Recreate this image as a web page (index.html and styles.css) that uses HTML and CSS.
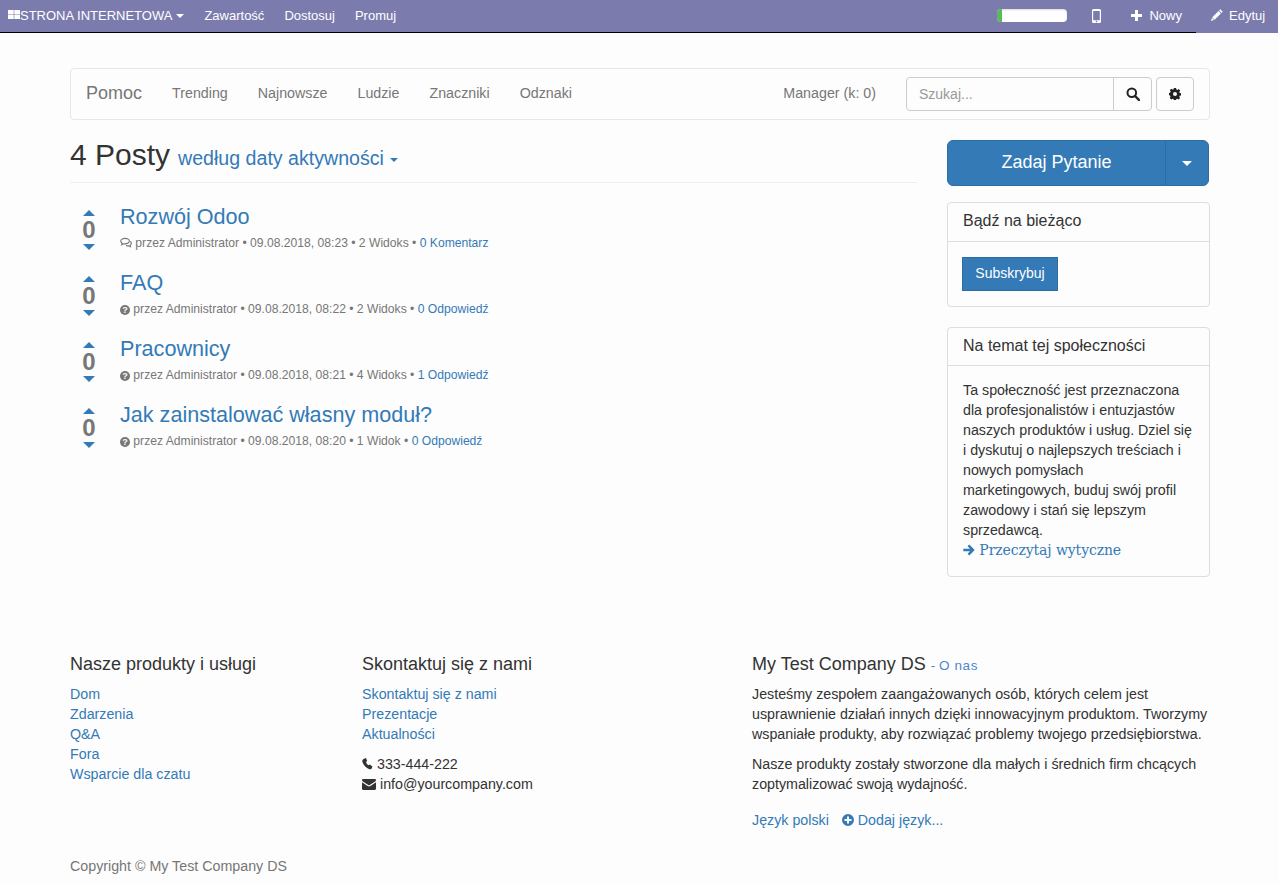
FILE: index.html
```html
<!DOCTYPE html>
<html lang="pl">
<head>
    <meta charset="utf-8">
    <title>Pomoc</title>
    <link rel="stylesheet" href="styles.css">
</head>
<body>
    <!-- admin bar -->
    <div class="topbar">
        <div class="topleft">
            <a class="toplink sitemenu" href="#">
                <svg class="apps" width="12" height="9" viewBox="0 0 12 9"><path fill="#fff" d="M0 0h5.700v4.300H0zM6.300 0H12v4.300H6.300zM0 4.800h5.700V9H0zM6.300 4.800H12V9H6.300z"/></svg>STRONA INTERNETOWA<span class="caret"></span>
            </a>
            <a class="toplink" href="#">Zawartość</a>
            <a class="toplink" href="#">Dostosuj</a>
            <a class="toplink" href="#">Promuj</a>
        </div>
        <div class="topright">
            <div class="progress"><div class="progressfill"></div></div>
            <a class="toplink mobile" href="#">
                <svg width="9" height="14" viewBox="0 0 9 14"><path fill="#fff" fill-rule="evenodd" d="M1.500 0h6A1.500 1.500 0 0 1 9 1.500v11A1.500 1.500 0 0 1 7.500 14h-6A1.500 1.500 0 0 1 0 12.500v-11A1.500 1.500 0 0 1 1.500 0zM1.200 2v9.300h6.600V2zM4.500 11.800a.8.8 0 1 0 0 1.600.8.8 0 0 0 0-1.600z"/></svg>
            </a>
            <a class="toplink newlink" href="#">
                <svg width="11" height="11" viewBox="0 0 11 11"><path fill="#fff" d="M4 0h3v4h4v3H7v4H4V7H0V4h4z"/></svg>Nowy
            </a>
            <a class="toplink editlink" href="#">
                <svg width="12" height="12" viewBox="0 0 12 12"><path fill="#fff" d="M9.300 .3l2.400 2.400-1.200 1.200-2.400-2.400zM7.500 2.100l2.400 2.400-6.300 6.300-2.400-2.400zM.9 9l2.100 2.100-3 .9z"/></svg>Edytuj
            </a>
        </div>
    </div>

    <div class="page">
        <!-- forum nav -->
        <nav class="forumnav">
            <a class="brand" href="#">Pomoc</a>
            <a class="navlink" href="#">Trending</a>
            <a class="navlink" href="#">Najnowsze</a>
            <a class="navlink" href="#">Ludzie</a>
            <a class="navlink" href="#">Znaczniki</a>
            <a class="navlink" href="#">Odznaki</a>
            <a class="navlink manager" href="#">Manager (k: 0)</a>
            <div class="searchgroup">
                <input class="searchinput" type="text" placeholder="Szukaj...">
                <button class="searchbtn" type="button">
                    <svg width="14" height="14" viewBox="0 0 14 14"><circle cx="5.800" cy="5.800" r="4.300" fill="none" stroke="#222" stroke-width="2"/><path d="M9 9l4 4" stroke="#222" stroke-width="2.400" stroke-linecap="round"/></svg>
                </button>
            </div>
            <button class="gearbtn" type="button">
                <svg width="12" height="12" viewBox="0 0 12 12"><path fill="#222" fill-rule="evenodd" d="M4.900 0h2.200l.3 1.600 1 .4 1.300-.9 1.500 1.500-.9 1.400.5 1 1.200.3v2.200l-1.300.3-.4 1 .8 1.300-1.500 1.500-1.400-.8-1 .4-.3 1.400H4.900l-.3-1.400-1-.4-1.400.8L.7 10l.8-1.300-.4-1L0 7.100V4.900l1.200-.3.5-1-.9-1.400L2.300 .7l1.300 .9 1-.4zM6 4a2 2 0 1 0 0 4 2 2 0 0 0 0-4z"/></svg>
            </button>
        </nav>

        <div class="content">
            <div class="maincol">
                <div class="posthead">
                    <h1>4 Posty</h1>
                    <a class="sortlink" href="#">według daty aktywności<span class="caret"></span></a>
                </div>

                <div class="post">
                    <div class="vote"><span class="up"></span><b>0</b><span class="down"></span></div>
                    <div class="postbody">
                        <a class="posttitle" href="#">Rozwój Odoo</a>
                        <div class="postmeta">
                            <svg class="metaicon" width="12" height="11" viewBox="0 0 13 11"><path fill="none" stroke="#777" stroke-width="1.200" d="M5.500 1C2.900 1 .8 2.300.8 4c0 .9.600 1.700 1.500 2.300L1.800 8l2-1.100c.5.100 1.100.1 1.700.1 2.600 0 4.700-1.300 4.700-3S8.100 1 5.500 1zM11 4.500c.8.500 1.300 1.200 1.300 2 0 .8-.5 1.500-1.300 2l.4 1.600-1.800-1c-1 .2-2.200 0-3-.4"/></svg>
                            przez Administrator • 09.08.2018, 08:23 • 2 Widoks • <a href="#">0 Komentarz</a>
                        </div>
                    </div>
                </div>

                <div class="post">
                    <div class="vote"><span class="up"></span><b>0</b><span class="down"></span></div>
                    <div class="postbody">
                        <a class="posttitle" href="#">FAQ</a>
                        <div class="postmeta">
                            <span class="qicon">?</span>
                            przez Administrator • 09.08.2018, 08:22 • 2 Widoks • <a href="#">0 Odpowiedź</a>
                        </div>
                    </div>
                </div>

                <div class="post">
                    <div class="vote"><span class="up"></span><b>0</b><span class="down"></span></div>
                    <div class="postbody">
                        <a class="posttitle" href="#">Pracownicy</a>
                        <div class="postmeta">
                            <span class="qicon">?</span>
                            przez Administrator • 09.08.2018, 08:21 • 4 Widoks • <a href="#">1 Odpowiedź</a>
                        </div>
                    </div>
                </div>

                <div class="post">
                    <div class="vote"><span class="up"></span><b>0</b><span class="down"></span></div>
                    <div class="postbody">
                        <a class="posttitle" href="#">Jak zainstalować własny moduł?</a>
                        <div class="postmeta">
                            <span class="qicon">?</span>
                            przez Administrator • 09.08.2018, 08:20 • 1 Widok • <a href="#">0 Odpowiedź</a>
                        </div>
                    </div>
                </div>
            </div>

            <div class="sidecol">
                <div class="askgroup">
                    <a class="askbtn" href="#">Zadaj Pytanie</a>
                    <a class="askdrop" href="#"><span class="caret"></span></a>
                </div>

                <div class="panel first">
                    <div class="panelhead">Bądź na bieżąco</div>
                    <div class="panelbody subbody">
                        <a class="subbtn" href="#">Subskrybuj</a>
                    </div>
                </div>

                <div class="panel">
                    <div class="panelhead">Na temat tej społeczności</div>
                    <div class="panelbody">
                        <p>Ta społeczność jest przeznaczona dla profesjonalistów i entuzjastów naszych produktów i usług. Dziel się i dyskutuj o najlepszych treściach i nowych pomysłach<br>marketingowych, buduj swój profil zawodowy i stań się lepszym sprzedawcą.</p>
                        <a class="guide" href="#">
                            <svg width="12" height="12" viewBox="0 0 12 12"><path fill="#337ab7" d="M6.300 .6L11.700 6l-5.400 5.400-1.700-1.700 2.400-2.400H.3V4.700h6.700L4.600 2.300z"/></svg>
                            Przeczytaj wytyczne
                        </a>
                    </div>
                </div>
            </div>
        </div>

        <!-- footer -->
        <footer class="footer">
            <div class="footcols">
                <div class="footcol one">
                    <h4>Nasze produkty i usługi</h4>
                    <a href="#">Dom</a>
                    <a href="#">Zdarzenia</a>
                    <a href="#">Q&amp;A</a>
                    <a href="#">Fora</a>
                    <a href="#">Wsparcie dla czatu</a>
                </div>
                <div class="footcol two">
                    <h4>Skontaktuj się z nami</h4>
                    <a href="#">Skontaktuj się z nami</a>
                    <a href="#">Prezentacje</a>
                    <a href="#">Aktualności</a>
                    <div class="contact">
                        <div>
                            <svg width="11" height="12" viewBox="0 0 11 12"><path fill="#333" d="M2.600.5L4 .1l1.200 2.900-1.200 1c.4 1.300 1.300 2.500 2.500 3.300l1.200-.9L10.400 8.500 9.800 10.200C9.400 11.200 8.300 11.600 7.400 11.200 3.800 9.800 1 6.700.3 3.300.1 2 1.200.9 2.600.5z"/></svg>
                            333-444-222
                        </div>
                        <div>
                            <svg width="14" height="11" viewBox="0 0 14 11"><path fill="#333" d="M1.200 0h11.600C13.500 0 14 .5 14 1.100c0 .5-.4 1-.8 1.300L7.700 6c-.4.300-1 .3-1.400 0L.8 2.400C.4 2.100 0 1.600 0 1.100 0 .5.500 0 1.200 0zM0 3.300l5.600 3.800c.9.600 1.900.6 2.800 0L14 3.300v6.500c0 .7-.5 1.200-1.200 1.200H1.200C.5 11 0 10.500 0 9.800z"/></svg>
                            info@yourcompany.com
                        </div>
                    </div>
                </div>
                <div class="footcol three">
                    <h4>My Test Company DS <small>- <a class="about" href="#">O nas</a></small></h4>
                    <p>Jesteśmy zespołem zaangażowanych osób, których celem jest usprawnienie działań innych dzięki innowacyjnym produktom. Tworzymy wspaniałe produkty, aby rozwiązać problemy twojego przedsiębiorstwa.</p>
                    <p>Nasze produkty zostały stworzone dla małych i średnich firm chcących zoptymalizować swoją wydajność.</p>
                    <div class="langs">
                        <a href="#">Język polski</a>
                        <a class="addlang" href="#">
                            <svg width="12" height="12" viewBox="0 0 12 12"><path fill="#337ab7" fill-rule="evenodd" d="M6 0a6 6 0 1 1 0 12A6 6 0 0 1 6 0zM5 2.500v2.500H2.500v2H5v2.500h2V7h2.500V5H7V2.500z"/></svg>
                            Dodaj język...
                        </a>
                    </div>
                </div>
            </div>
            <div class="copyright">Copyright © My Test Company DS</div>
        </footer>
    </div>
</body>
</html>
```

FILE: styles.css
```css
/*base*/
* {
    box-sizing: border-box;
}

body {
    margin: 0;
    background-color: #fdfdfd;
    color: #333;
    font-family: "Liberation Sans", Arial, sans-serif;
    font-size: 14.25px;
    line-height: 20px;
}

a {
    color: #337ab7;
    text-decoration: none;
}

.caret {
    display: inline-block;
    width: 0;
    height: 0;
    margin-left: 2px;
    vertical-align: middle;
    border-top: 4px solid;
    border-right: 4px solid transparent;
    border-left: 4px solid transparent;
}

/*admin bar*/
.topbar {
    display: flex;
    justify-content: space-between;
    height: 33px;
    background-color: #7c7bad;
    border-bottom: 1px solid #000;
    font-size: 13px;
}

.topleft {
    display: flex;
}

.topright {
    display: flex;
    align-items: flex-start;
}

.toplink {
    display: flex;
    align-items: center;
    height: 32px;
    padding: 0 10px;
    color: #fff;
}

.sitemenu {
    padding-left: 8px;
}

.apps {
    margin-bottom: 4px;
}

.sitemenu .caret {
    margin-left: 4px;
}

.progress {
    width: 70px;
    height: 13px;
    margin: 9px 15px 0 0;
    background-color: #fff;
    border-radius: 4px;
    box-shadow: inset 0 1px 2px rgba(0, 0, 0, 0.15);
    overflow: hidden;
}

.progressfill {
    width: 5px;
    height: 100%;
    background-color: #5cb85c;
}

.mobile {
    padding: 0 20px 0 10px;
}

.newlink svg {
    margin-right: 7px;
    margin-bottom: 2px;
}

.newlink {
    padding-right: 14px;
}

.editlink {
    width: 82px;
    height: 33px;
    padding: 0 0 1px 15px;
    background-color: #7c7bad;
}

.editlink svg {
    margin-right: 6px;
    margin-bottom: 2px;
}

/*page*/
.page {
    width: 1140px;
    margin-left: 70px;
}

.forumnav {
    display: flex;
    align-items: center;
    height: 52px;
    margin-top: 35px;
    padding: 0 15px;
    background-color: #fdfdfd;
    border: 1px solid #e7e7e7;
    border-radius: 4px;
}

.brand {
    margin-right: 30px;
    margin-bottom: 2px;
    color: #777;
    font-size: 18px;
}

.navlink {
    margin-right: 30px;
    margin-bottom: 2px;
    color: #777;
}

.manager {
    margin-left: auto;
}

.searchgroup {
    display: flex;
}

.searchinput {
    width: 208px;
    height: 34px;
    padding: 6px 12px;
    background-color: #fdfdfd;
    border: 1px solid #ccc;
    border-radius: 4px 0 0 4px;
    font-family: inherit;
    font-size: 14px;
}

.searchinput::placeholder {
    color: #999;
}

.searchbtn,
.gearbtn {
    display: flex;
    align-items: center;
    justify-content: center;
    height: 34px;
    padding: 0;
    background-color: #fdfdfd;
    border: 1px solid #ccc;
}

.searchbtn {
    width: 39px;
    margin-left: -1px;
    border-radius: 0 4px 4px 0;
}

.gearbtn {
    width: 38px;
    margin-left: 4px;
    border-radius: 4px;
}

.content {
    display: flex;
    justify-content: space-between;
}

/*posts*/
.maincol {
    width: 847px;
    padding-top: 20px;
}

.posthead {
    display: flex;
    align-items: baseline;
    height: 43px;
    border-bottom: 1px solid #eee;
}

.posthead h1 {
    margin: 0 8px 0 0;
    color: #333;
    font-size: 30px;
    font-weight: 400;
    line-height: 30px;
}

.sortlink {
    font-size: 19.6px;
}

.sortlink .caret {
    margin-left: 6px;
}

.post {
    display: flex;
    height: 66px;
    padding-top: 22px;
}

.vote {
    display: flex;
    flex-direction: column;
    align-items: center;
    width: 38px;
    margin-top: 5px;
}

.vote b {
    margin: 1px 0 -1px;
    color: #777;
    font-size: 24px;
    line-height: 26px;
}

.up,
.down {
    width: 0;
    height: 0;
    border-right: 6px solid transparent;
    border-left: 6px solid transparent;
}

.up {
    border-bottom: 6px solid #337ab7;
}

.down {
    border-top: 6px solid #337ab7;
    margin-top: 2px;
}

.postbody {
    margin-left: 12px;
}

.posttitle {
    display: block;
    margin-top: -3px;
    font-size: 21.6px;
    line-height: 30px;
}

.postmeta {
    margin-top: 1px;
    color: #777;
    font-size: 12.13px;
    line-height: 20px;
    white-space: nowrap;
}

.metaicon {
    vertical-align: -1px;
}

.qicon {
    display: inline-block;
    width: 10px;
    height: 10px;
    background-color: #777;
    border-radius: 50%;
    color: #fdfdfd;
    font-size: 9px;
    font-weight: 700;
    line-height: 10px;
    text-align: center;
}

/*sidebar*/
.sidecol {
    width: 263px;
    padding-top: 20px;
}

.askgroup {
    display: flex;
    width: 262px;
    height: 46px;
    background-color: #337ab7;
    border: 1px solid #2e6da4;
    border-radius: 6px;
}

.askbtn {
    flex: 1;
    color: #fff;
    font-size: 18px;
    line-height: 43px;
    text-align: center;
}

.askdrop {
    display: flex;
    align-items: center;
    justify-content: center;
    width: 43px;
    border-left: 1px solid #2e6da4;
    color: #fff;
}

.askdrop .caret {
    margin-left: 0;
    border-width: 5px 5px 0;
}

.panel {
    margin-top: 20px;
    background-color: #fdfdfd;
    border: 1px solid #ddd;
    border-radius: 4px;
}

.panel.first {
    margin-top: 16px;
}

.panelhead {
    height: 38px;
    padding: 8px 15px;
    border-bottom: 1px solid #ddd;
    color: #333;
    font-size: 16px;
    line-height: 20px;
}

.panel.first .panelhead {
    height: 39px;
}

.panelbody {
    padding: 14px 15px 16px;
}

.panelbody p {
    margin: 0;
}

.subbody {
    height: 64px;
    padding: 15px 14px;
}

.subbtn {
    display: block;
    width: 96px;
    height: 34px;
    background-color: #337ab7;
    border: 1px solid #2e6da4;
    color: #fff;
    font-size: 14px;
    line-height: 30px;
    text-align: center;
}

.guide {
    display: block;
    font-family: "DejaVu Serif", serif;
    font-size: 14px;
    letter-spacing: -0.1px;
}

.guide svg {
    vertical-align: -1px;
}

/*footer*/
.footer {
    margin-top: 77px;
}

.footcols {
    display: flex;
}

.footcol.one {
    width: 292px;
}

.footcol.two {
    width: 390px;
}

.footcol.three {
    width: 458px;
}

.footcol h4 {
    margin: 0 0 10px;
    color: #333;
    font-size: 18px;
    font-weight: 400;
    line-height: 20px;
}

.footcol h4 small {
    color: #4f88cc;
    font-size: 13.5px;
    line-height: 1;
}

.footcol h4 small a {
    color: #4f88cc;
    letter-spacing: 0.6px;
}

.footcol > a {
    display: block;
}

.footcol p {
    margin: 0 0 10px;
    color: #333;
}

.contact {
    margin-top: 10px;
}

.contact svg {
    vertical-align: -1px;
}

.langs {
    display: flex;
    gap: 13px;
    margin-top: 16px;
}

.addlang svg {
    vertical-align: -1px;
}

.copyright {
    margin-top: 26px;
    padding-bottom: 7px;
    color: #777;
}
```
